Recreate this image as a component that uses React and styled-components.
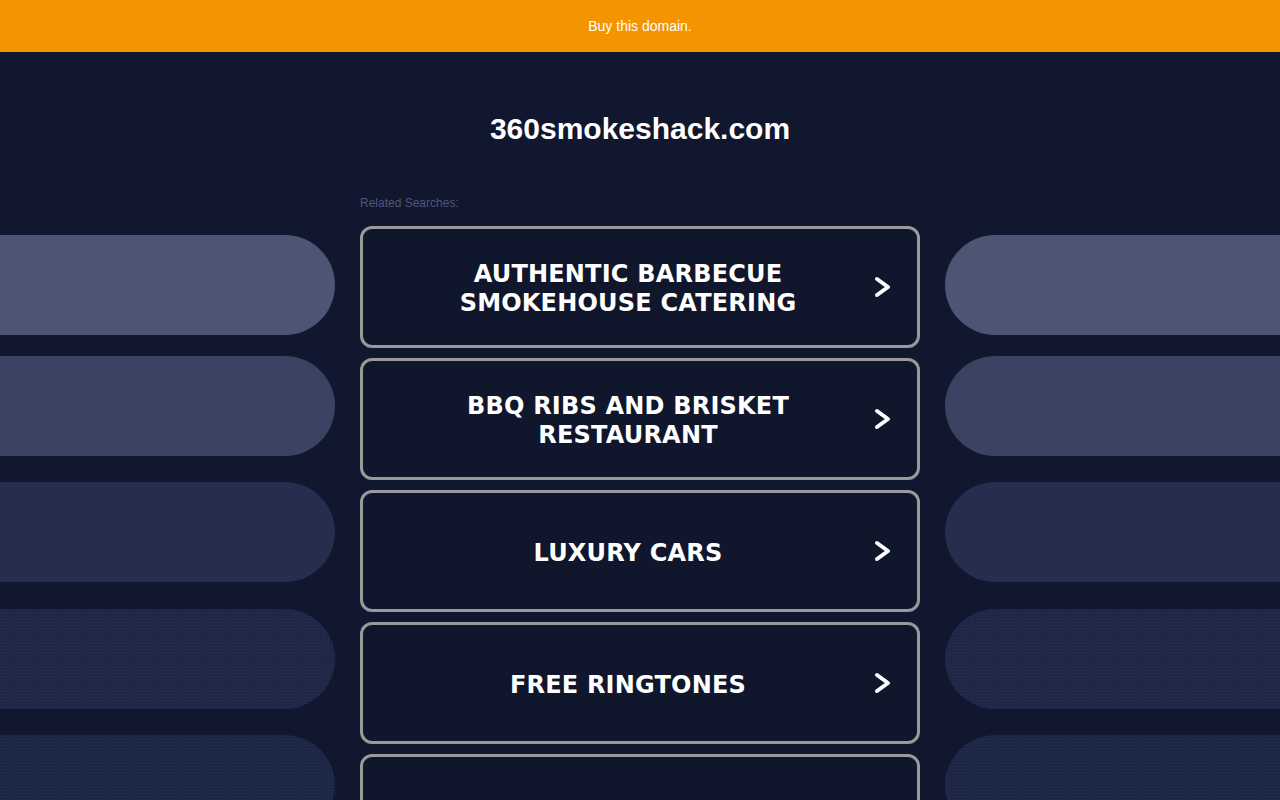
import React from "react";
import styled, { createGlobalStyle } from "styled-components";

const DOMAIN = "360smokeshack.com";
const SEARCHES = [
  "AUTHENTIC BARBECUE SMOKEHOUSE CATERING",
  "BBQ RIBS AND BRISKET RESTAURANT",
  "LUXURY CARS",
  "FREE RINGTONES",
  "",
];
const PILLS = [
  { color: "#4c5573", gap: 0 },
  { color: "#3b4362", gap: 21 },
  { color: "#262e4d", gap: 26 },
  { color: "#1e2746", gap: 27, dotted: true },
  { color: "#1c2645", gap: 26, dotted: true },
];

const GlobalStyle = createGlobalStyle`
  html, body {
    margin: 0;
    padding: 0;
    background: #11172e;
    overflow: hidden;
  }
`;

const Chevron = () => (
  <ChevronIcon viewBox="0 0 24 24">
    <polyline points="8,4 19,12 8,20" />
  </ChevronIcon>
);

const App = () => {
  return (
    <Page>
      <GlobalStyle />
      <Banner>Buy this domain.</Banner>
      <Title>{DOMAIN}</Title>
      <Layout>
        <SideColumn>
          {PILLS.map((p, i) => (
            <Pill key={i} $side="left" $color={p.color} $gap={p.gap} $dotted={p.dotted} />
          ))}
        </SideColumn>
        <Center>
          <Related>Related Searches:</Related>
          <List>
            {SEARCHES.map((s, i) => (
              <SearchButton key={i}>
                <SearchText>{s}</SearchText>
                <Chevron />
              </SearchButton>
            ))}
          </List>
        </Center>
        <SideColumn>
          {PILLS.map((p, i) => (
            <Pill key={i} $side="right" $color={p.color} $gap={p.gap} $dotted={p.dotted} />
          ))}
        </SideColumn>
      </Layout>
    </Page>
  );
};

const Page = styled.div`
  height: 800px;
  overflow: hidden;
  background: #11172e;
`;

const Banner = styled.div`
  height: 52px;
  background: #f39400;
  color: #ffffff;
  font-family: "Liberation Sans", Arial, sans-serif;
  font-size: 14px;
  display: flex;
  align-items: center;
  justify-content: center;
`;

const Title = styled.h1`
  margin: 59px 0 0;
  height: 36px;
  line-height: 36px;
  text-align: center;
  color: #ffffff;
  font-family: "Liberation Sans", Arial, sans-serif;
  font-weight: bold;
  font-size: 30px;
`;

const Layout = styled.div`
  display: grid;
  grid-template-columns: 1fr 560px 1fr;
  column-gap: 25px;
  margin-top: 48px;
`;

const SideColumn = styled.div`
  display: flex;
  flex-direction: column;
  padding-top: 40px;
`;

const Pill = styled.div`
  height: 100px;
  margin-top: ${(p) => p.$gap}px;
  background-color: ${(p) => p.$color};
  background-image: ${(p) =>
    p.$dotted
      ? "radial-gradient(rgba(255,255,255,0.05) 0.6px, transparent 0.8px)"
      : "none"};
  background-size: 3px 3px;
  border-radius: ${(p) => (p.$side === "left" ? "0 50px 50px 0" : "50px 0 0 50px")};
`;

const Center = styled.div`
  display: flex;
  flex-direction: column;
`;

const Related = styled.div`
  height: 14px;
  line-height: 14px;
  margin-top: 1px;
  font-family: "Liberation Sans", Arial, sans-serif;
  font-size: 12px;
  color: #4e5878;
  margin-bottom: 16px;
`;

const List = styled.div`
  display: flex;
  flex-direction: column;
  gap: 10px;
`;

const SearchButton = styled.div`
  box-sizing: border-box;
  height: 122px;
  flex-shrink: 0;
  border: 3px solid #999999;
  border-radius: 12px;
  background: #10162c;
  display: flex;
  align-items: center;
  padding: 0 24px;
`;

const SearchText = styled.div`
  flex: 1;
  text-align: center;
  color: #ffffff;
  font-family: "DejaVu Sans", Verdana, sans-serif;
  font-weight: bold;
  font-size: 24px;
  letter-spacing: 0.2px;
  line-height: 29px;
  padding: 4px 30px 0;
`;

const ChevronIcon = styled.svg`
  width: 24px;
  height: 24px;
  flex-shrink: 0;
  fill: none;
  stroke: #ffffff;
  stroke-width: 4;
  stroke-linecap: round;
  stroke-linejoin: round;
`;

export default App;
